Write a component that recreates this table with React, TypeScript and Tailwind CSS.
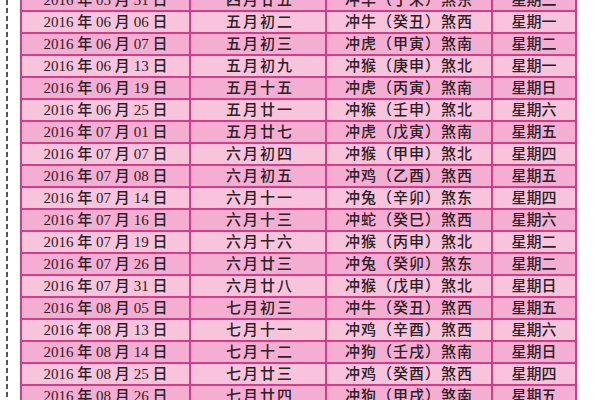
import React from 'react';

const rows = [
  ['05', '31', '四月廿五', '羊', '丁未', '东', '二'],
  ['06', '06', '五月初二', '牛', '癸丑', '西', '一'],
  ['06', '07', '五月初三', '虎', '甲寅', '南', '二'],
  ['06', '13', '五月初九', '猴', '庚申', '北', '一'],
  ['06', '19', '五月十五', '虎', '丙寅', '南', '日'],
  ['06', '25', '五月廿一', '猴', '壬申', '北', '六'],
  ['07', '01', '五月廿七', '虎', '戊寅', '南', '五'],
  ['07', '07', '六月初四', '猴', '甲申', '北', '四'],
  ['07', '08', '六月初五', '鸡', '乙酉', '西', '五'],
  ['07', '14', '六月十一', '兔', '辛卯', '东', '四'],
  ['07', '16', '六月十三', '蛇', '癸巳', '西', '六'],
  ['07', '19', '六月十六', '猴', '丙申', '北', '二'],
  ['07', '26', '六月廿三', '兔', '癸卯', '东', '二'],
  ['07', '31', '六月廿八', '猴', '戊申', '北', '日'],
  ['08', '05', '七月初三', '牛', '癸丑', '西', '五'],
  ['08', '13', '七月十一', '鸡', '辛酉', '西', '六'],
  ['08', '14', '七月十二', '狗', '壬戌', '南', '日'],
  ['08', '25', '七月廿三', '鸡', '癸酉', '西', '四'],
  ['08', '26', '七月廿四', '狗', '甲戌', '南', '五'],
];

const font = { fontFamily: '"Liberation Serif", "Noto Sans CJK SC", serif' };

const App = () => {
  return (
    <div className="w-[600px] h-[400px] overflow-hidden bg-white flex text-[#2e2028]" style={font}>
      {/* dashed cut line */}
      <div className="w-[20px] shrink-0 flex justify-center pr-[6px]">
        <div className="w-[2px] h-full bg-[repeating-linear-gradient(to_bottom,#555_0_5px,transparent_5px_8px)]" />
      </div>

      {/* table */}
      <div className="w-[557px] shrink-0 -mt-[10px] border-l-2 border-r-2 border-[#d63c86] self-start">
        {rows.map((r, i) => (
          <div
            key={i}
            className={`grid grid-cols-[169px_136px_166px_82px] h-[22px] border-b-2 border-[#d63c86] text-[15px] leading-[20px] font-medium ${
              i % 2 === 0 ? 'bg-[#f4aed1]' : 'bg-[#f8c4dc]'
            }`}
          >
            <div className="flex items-center justify-center border-r-2 border-[#d63c86] whitespace-nowrap">
              2016 年 {r[0]} 月 {r[1]} 日
            </div>
            <div className="flex items-center justify-center border-r-2 border-[#d63c86] tracking-[2px] pl-[4px]">
              {r[2]}
            </div>
            <div className="flex items-center justify-center border-r-2 border-[#d63c86] whitespace-nowrap tracking-[1px]">
              冲{r[3]}（{r[4]}）煞{r[5]}
            </div>
            <div className="flex items-center justify-center">星期{r[6]}</div>
          </div>
        ))}
      </div>
    </div>
  );
};

export default App;
